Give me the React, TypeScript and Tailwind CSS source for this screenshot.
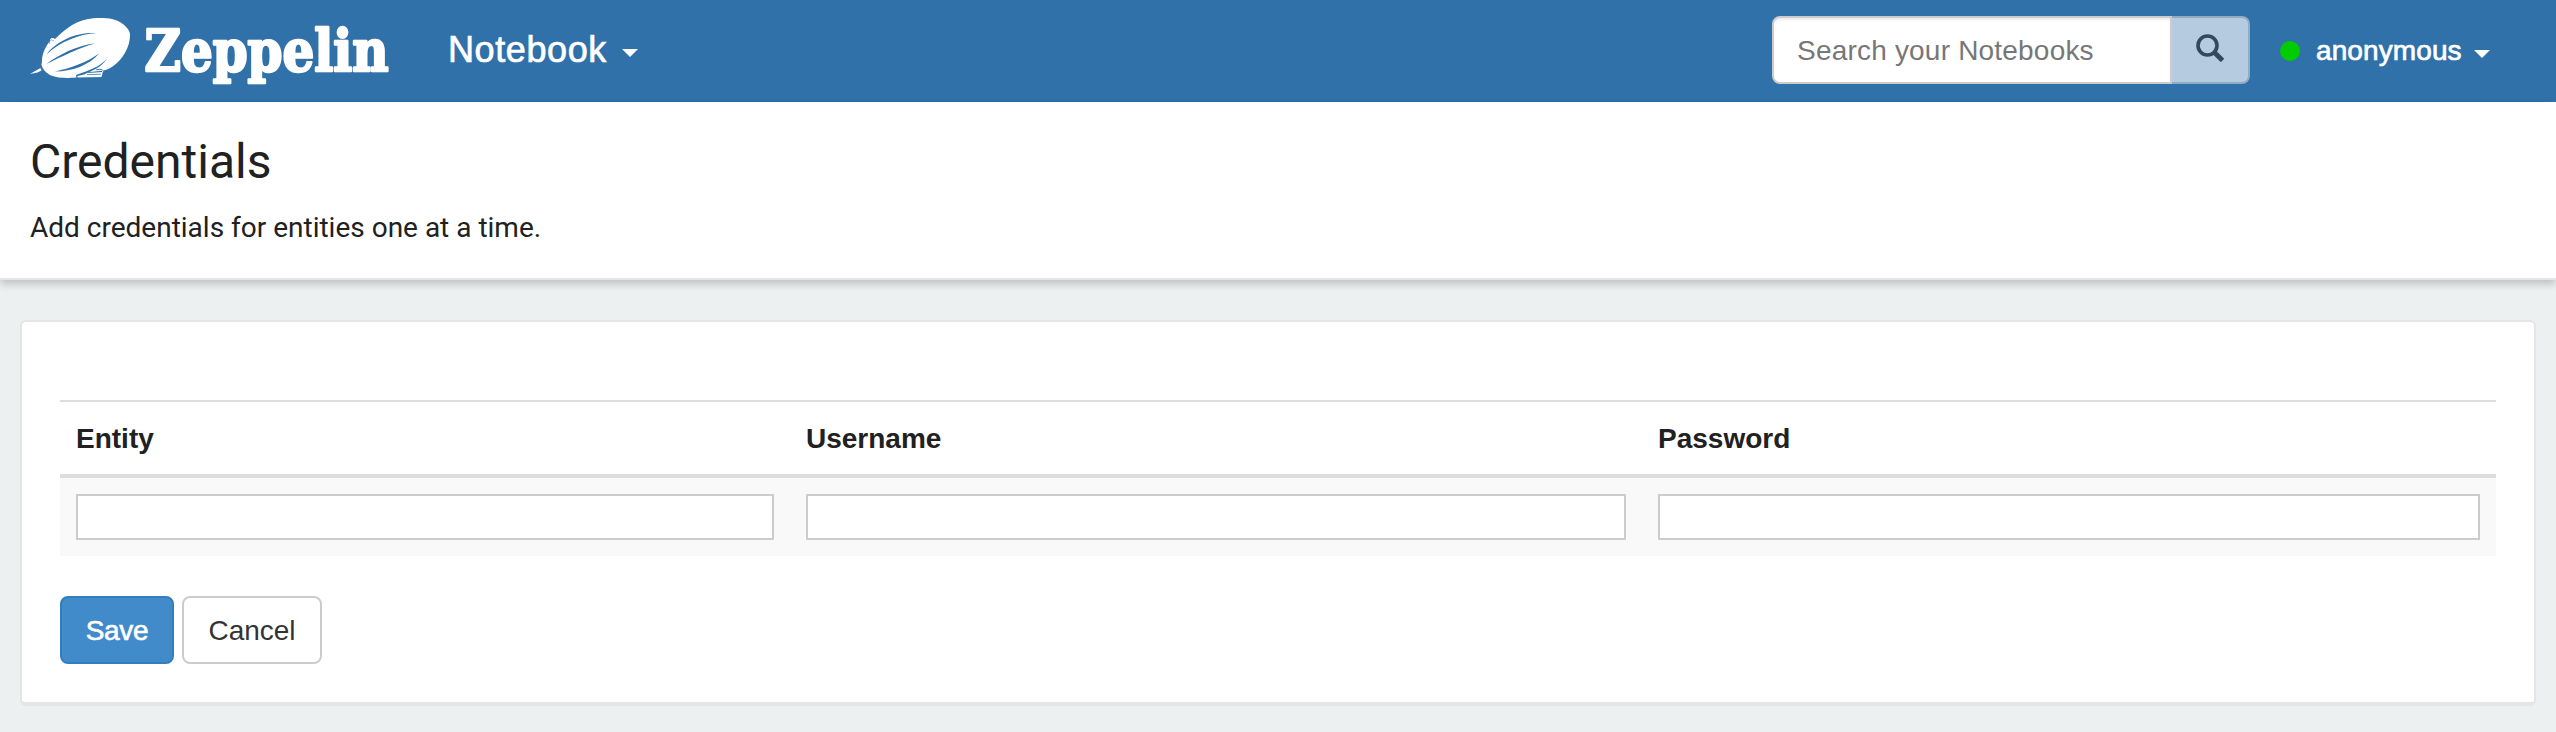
function ZeppelinLogo() {
  return (
    <svg className="block h-[102px] w-[400px] overflow-visible" viewBox="0 0 400 102" role="img" aria-label="Zeppelin">
      <path
        fill="#fff"
        d="M42 61C42 53 46 46 50 41C49.500 39.500 51 37.500 53 38L55 39C62 32 74 21.500 87 19.300C94 17.600 105 17.500 112 19C121 21 129.500 28 130 34C130.500 47 122 60 114 65.500C110 68.500 106 70 103.500 70.500L101.500 77L76 77.500C68 78.500 57 78 51 75.500C46 73 42.500 69 41.500 65Z"
      />
      <path fill="#fff" d="M30 74L36 70.500L40.500 68L41.500 70.500L37.500 72.500Z" />
      <g fill="#3071a9">
        <path d="M46.800 54.200C56 41.500 77 31.500 96 33.300C79 34 60 42 46.800 54.200Z" />
        <path d="M46.500 64C58 55 78 45 95.500 43.300C80 47.500 61 57 46.500 64Z" />
        <path d="M55 71.500C71 68 88 62 99.500 53C89 65.500 72 71.500 55 71.500Z" />
        <path d="M76.500 78L76 75C89 70.500 99 67 107 59C100 68.500 91 71 84 74.500L77.500 76V78Z" />
        <path d="M88 72.200L102 70.800V72L88 73Z" />
        <path d="M87 74.300L101 73.700V74.600L87 75.100Z" />
        <path d="M96 69.500Q101 67.500 103.500 70.500L101.500 77L103 70.800Q101 69 96 70.300Z" />
      </g>
      <path d="M49.600 44V41.500Q51 38.500 54 41" fill="none" stroke="#3071a9" strokeWidth="0.500" />
      <text
        x="144.500"
        y="70.500"
        fill="#fff"
        stroke="#fff"
        strokeWidth="2.400"
        strokeLinejoin="round"
        textLength="244"
        lengthAdjust="spacingAndGlyphs"
        className="font-['DejaVu_Serif_Condensed','DejaVu_Serif',serif] text-[58px] font-bold"
      >
        Zeppelin
      </text>
    </svg>
  );
}

function Caret() {
  return (
    <span className="inline-block h-0 w-0 border-x-8 border-t-8 border-x-transparent border-t-white" />
  );
}

const columns = [
  { label: "Entity", width: "w-[730px]", type: "text" },
  { label: "Username", width: "w-[852px]", type: "text" },
  { label: "Password", width: "w-[854px]", type: "password" },
];

export default function App() {
  return (
    <div className="h-[732px] w-full overflow-hidden bg-[#ecf0f1] font-['Liberation_Sans',Arial,sans-serif] text-[28px] leading-10 text-[#212121]">
      <nav className="flex h-[102px] items-center bg-[#3071a9] text-white">
        <ZeppelinLogo />
        <a className="ml-12 flex items-center text-[36px] [-webkit-text-stroke:0.7px_white]">
          <span className="w-[174px] pb-0.5 tracking-[0.6px]">Notebook</span>
          <span className="flex pt-[3px]"><Caret /></span>
        </a>
        <form className="mb-0.5 ml-auto flex h-[68px] w-[478px]">
          <input
            aria-label="Search"
            placeholder="Search your Notebooks"
            className="h-[68px] w-[400px] rounded-l-lg border-2 border-[#ccc] bg-white px-[23px] pt-0.5 tracking-[0.2px] shadow-[inset_0_2px_2px_rgba(0,0,0,0.075)] placeholder:text-[#777]"
          />
          <button
            type="button"
            aria-label="Submit search"
            className="flex w-[78px] items-center justify-center rounded-r-lg border-2 border-l-0 border-[#93abc2] bg-[#b5cbe0]"
          >
            <svg className="mb-1 h-7 w-7" viewBox="0 0 28 28" fill="none" stroke="#34495e">
              <circle cx="11.500" cy="11.500" r="9.500" strokeWidth="3.600" />
              <path d="M18.500 18.500L26.500 26.500" strokeWidth="4.800" />
            </svg>
          </button>
        </form>
        <div className="mr-[66px] ml-[30px] flex items-center">
          <span className="h-5 w-5 rounded-full bg-[#00cc00]" />
          <span className="ml-4 w-[158px] tracking-[0.1px] [-webkit-text-stroke:0.7px_white]">anonymous</span>
          <span className="flex pt-[5px]"><Caret /></span>
        </div>
      </nav>
      <header className="h-[178px] border-b-2 border-[#e5e5e5] bg-white pl-[30px] font-[Roboto,sans-serif] shadow-[0_4px_8px_rgba(0,0,0,0.2)]">
        <h3 className="pt-[33px] text-[48px] leading-[53px]">Credentials</h3>
        <p className="mt-5">Add credentials for entities one at a time.</p>
      </header>
      <main className="mx-5 mt-10 h-[386px] rounded-[6px] border-2 border-b-4 border-[#e5e5e5] bg-white px-[38px] pt-[78px]">
        <table className="w-full table-fixed border-separate border-spacing-0">
          <thead>
            <tr>
              {columns.map((column) => (
                <th
                  key={column.label}
                  className={`${column.width} h-[78px] border-t-2 border-b-4 border-[#ddd] px-4 pt-0.5 pb-0 text-left font-bold`}
                >
                  {column.label}
                </th>
              ))}
            </tr>
          </thead>
          <tbody>
            <tr className="bg-[#f9f9f9]">
              {columns.map((column) => (
                <td key={column.label} className="p-4">
                  <input
                    type={column.type}
                    aria-label={column.label}
                    className="block h-[46px] w-full border-2 border-[#ccc] bg-white px-2"
                  />
                </td>
              ))}
            </tr>
          </tbody>
        </table>
        <div className="mt-10 flex gap-2">
          <button className="h-[68px] w-[114px] rounded-lg border-2 border-[#357ebd] bg-[#428bca] pt-0.5 tracking-[-0.3px] text-white [-webkit-text-stroke:0.6px_white]">
            Save
          </button>
          <button className="h-[68px] w-[140px] rounded-lg border-2 border-[#ccc] bg-white pt-0.5 text-[#333]">
            Cancel
          </button>
        </div>
      </main>
    </div>
  );
}
